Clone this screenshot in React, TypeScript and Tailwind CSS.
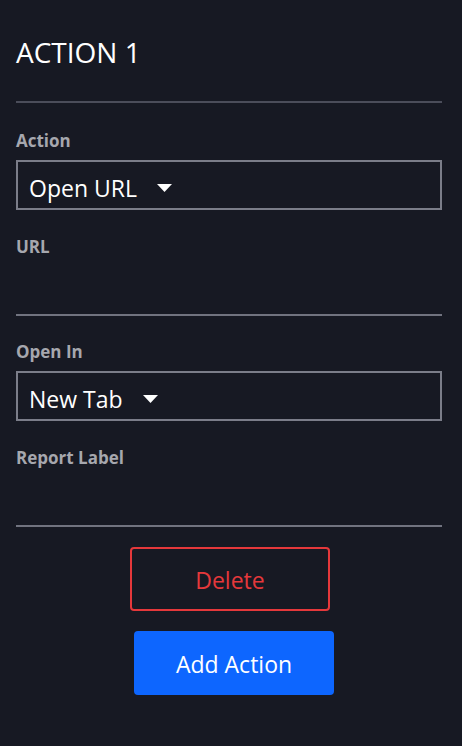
import React from "react";

const Caret = () => (
  <svg width="15" height="8" viewBox="0 0 15 8" className="ml-[20px]">
    <path d="M0 0 L15 0 L7.5 8 Z" fill="#ffffff" />
  </svg>
);

const Label = ({ children }: { children: React.ReactNode }) => (
  <div className="h-[20px] text-[17px] font-bold leading-[22px] text-[#a6a7ae]">{children}</div>
);

const Select = ({ value }: { value: string }) => (
  <div className="mt-[10px] flex h-[50px] w-full items-center border-2 border-[#7b7d89] pl-[11px] pt-[5px] text-[23px] leading-[30px] text-white">
    <span>{value}</span>
    <Caret />
  </div>
);

const Underline = () => <div className="h-[60px] w-full border-b-2 border-[#71737f]" />;

export default function App() {
  return (
    <div
      className="min-h-[746px] w-[462px] bg-[#171923] pl-4 pr-5 pt-[35px]"
      style={{ fontFamily: '"Open Sans", "Noto Sans", sans-serif' }}
    >
      <div className="h-[34px] text-[28px] leading-[34px] text-white">ACTION 1</div>
      <div className="mt-[32px] h-[2px] w-full bg-[#4b4d5a]" />
      <div className="mt-[27px]">
        <Label>Action</Label>
        <Select value="Open URL" />
      </div>
      <div className="mt-[26px]">
        <Label>URL</Label>
        <Underline />
      </div>
      <div className="mt-[25px]">
        <Label>Open In</Label>
        <Select value="New Tab" />
      </div>
      <div className="mt-[26px]">
        <Label>Report Label</Label>
        <Underline />
      </div>
      <div className="mt-[20px] flex flex-col items-start">
        <button className="ml-[114px] flex h-[64px] w-[200px] items-center justify-center rounded-[4px] border-2 border-[#e5383b] pt-[2px] text-[23px] text-[#e5383b]">
          Delete
        </button>
        <button className="ml-[118px] mt-[20px] flex h-[64px] w-[200px] items-center justify-center rounded-[4px] bg-[#0d66ff] pt-[3px] text-[23px] text-white">
          Add Action
        </button>
      </div>
    </div>
  );
}
